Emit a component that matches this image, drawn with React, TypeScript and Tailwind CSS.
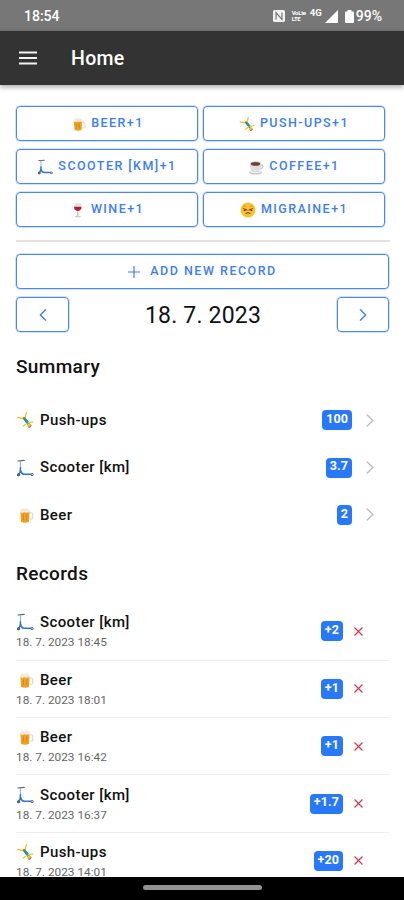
import type { ReactNode } from "react"

type Kind = "beer" | "pushups" | "scooter" | "coffee" | "wine" | "migraine"

type RecordItem = {
  kind: Kind
  name: string
  date: string
  amount: string
}

const quickButtons: { kind: Kind; label: string }[] = [
  { kind: "beer", label: "BEER+1" },
  { kind: "pushups", label: "PUSH-UPS+1" },
  { kind: "scooter", label: "SCOOTER [KM]+1" },
  { kind: "coffee", label: "COFFEE+1" },
  { kind: "wine", label: "WINE+1" },
  { kind: "migraine", label: "MIGRAINE+1" },
]

const summary: { kind: Kind; name: string; total: string }[] = [
  { kind: "pushups", name: "Push-ups", total: "100" },
  { kind: "scooter", name: "Scooter [km]", total: "3.7" },
  { kind: "beer", name: "Beer", total: "2" },
]

const records: RecordItem[] = [
  { kind: "scooter", name: "Scooter [km]", date: "18. 7. 2023 18:45", amount: "+2" },
  { kind: "beer", name: "Beer", date: "18. 7. 2023 18:01", amount: "+1" },
  { kind: "beer", name: "Beer", date: "18. 7. 2023 16:42", amount: "+1" },
  { kind: "scooter", name: "Scooter [km]", date: "18. 7. 2023 16:37", amount: "+1.7" },
  { kind: "pushups", name: "Push-ups", date: "18. 7. 2023 14:01", amount: "+20" },
]

const drawings: Record<Kind, ReactNode> = {
  beer: (
    <>
      <path d="M13 6.500h1.500q1.300 0 1.300 1.300v3.400q0 1.300-1.300 1.300H13" fill="none" stroke="#dddbd7" strokeWidth="1.200" />
      <path d="M4.200 5h8.600l-.5 10q-3.900 1.500-7.500 0z" fill="#f2a01d" />
      <path d="M7 8v5.500M10 8v5.500" stroke="#dc8a16" strokeWidth="1.100" />
      <path d="M3.800 5.600q-.6-2.200 1.400-2.600Q6.500 1.500 8.600 2.600q2-1 3.400.6 1.800.5 1.100 2.600-1.300.8-2.500.1l-1.200.8-1.500-.8-2 .8z" fill="#f3ead9" />
    </>
  ),
  pushups: (
    <>
      <path d="M8.300 7.200L9.800 1.800M7.600 7.400L1.400 6.200" stroke="#f5c33c" strokeWidth="1.500" strokeLinecap="round" fill="none" />
      <path d="M7.600 6.800l2 2.200" stroke="#66717c" strokeWidth="2.300" strokeLinecap="round" />
      <path d="M9.300 8.900l2 2.500" stroke="#1e9e92" strokeWidth="2.800" strokeLinecap="round" />
      <path d="M11.800 11l4-.7M10.200 11.800l-3.400 2.400" stroke="#f5c33c" strokeWidth="1.300" strokeLinecap="round" />
      <circle cx="12.600" cy="13.800" r="1.800" fill="#e9b43a" />
      <path d="M11.800 15.400q2.200.4 2.700-1.700" fill="none" stroke="#8d6239" strokeWidth=".9" />
    </>
  ),
  scooter: (
    <>
      <path d="M1.800 1.800l6-.5" stroke="#59616b" strokeWidth="1" fill="none" strokeLinecap="round" />
      <path d="M4.200 2v8" stroke="#8fb2d8" strokeWidth="1" />
      <path d="M4.200 8.400q.2 4.800-2 6.200M4.500 10.800q.3 3.400 3.200 3.600h6.400" stroke="#3076cf" strokeWidth="1.500" fill="none" strokeLinecap="round" />
      <circle cx="2.400" cy="14.900" r="1.500" fill="#4d6075" />
      <circle cx="15.200" cy="14.700" r="1.500" fill="#647382" />
      <circle cx="15.200" cy="14.700" r=".6" fill="#d9dfe5" />
    </>
  ),
  coffee: (
    <>
      <ellipse cx="8" cy="14.200" rx="7" ry="2.300" fill="#c8c8c8" />
      <ellipse cx="8" cy="13.600" rx="6.200" ry="1.600" fill="#eeeeee" />
      <path d="M13 6.400q3.500-.4 2.800 2-.6 2-3.600 2.100" fill="none" stroke="#bdbdbd" strokeWidth="1.200" />
      <path d="M2 5h12q0 8-4 9H6.200Q2 13 2 5z" fill="#dedede" />
      <ellipse cx="8" cy="5" rx="6" ry="2.600" fill="#d2ceca" />
      <ellipse cx="8" cy="5.200" rx="4.900" ry="1.900" fill="#6d4334" />
    </>
  ),
  wine: (
    <>
      <path d="M4.800 1h7l.5 4.800Q12 9.500 8.300 9.800 4.600 9.500 4.300 5.800z" fill="#e5e1e1" />
      <path d="M4.400 5h7.800q.2 4.200-3.900 4.500Q4.200 9.200 4.400 5z" fill="#b51f2d" />
      <path d="M8.300 9.700v5" stroke="#b9a9a9" strokeWidth="1.100" />
      <ellipse cx="8.300" cy="15.300" rx="3.200" ry="1" fill="#cccccc" />
    </>
  ),
  migraine: (
    <>
      <circle cx="8.500" cy="8.500" r="7.900" fill="#fbc02d" />
      <path d="M3.500 5.200l3-1.400M13.500 5.200l-3-1.400" stroke="#c88718" strokeWidth=".9" />
      <path d="M3.500 7l3.300 1.300-3 .9M13.500 7l-3.300 1.300 3 .9" stroke="#6e4413" strokeWidth="1.100" fill="none" />
      <path d="M6 12.700q2.500-2.400 5 0" stroke="#6e4413" strokeWidth="1.100" fill="none" />
    </>
  ),
}

function Emoji({ kind, className }: { kind: Kind; className: string }) {
  return (
    <svg viewBox="0 0 17 17" className={`shrink-0 ${className}`} aria-hidden>
      {drawings[kind]}
    </svg>
  )
}

function Chevron({ left = false, className }: { left?: boolean; className: string }) {
  return (
    <svg viewBox="0 0 8 14" fill="none" stroke="currentColor" strokeLinecap="round" strokeLinejoin="round" className={className} aria-hidden>
      <path d={left ? "M7 1L1 7l6 6" : "M1 1l6 6-6 6"} />
    </svg>
  )
}

function Badge({ children }: { children: ReactNode }) {
  return (
    <span className="flex h-5 items-center rounded-[4px] bg-[#2878fa] px-[4px] pb-[2px] text-[12.5px] leading-none font-bold tracking-[0.1px] text-white">
      {children}
    </span>
  )
}

function StatusBar() {
  return (
    <div className="flex h-[31px] shrink-0 items-center bg-[#777] pt-px pr-[22px] pl-[24px] text-white">
      <span className="text-[14px] font-medium">18:54</span>
      <div className="ml-auto flex items-center">
        <svg viewBox="0 0 12 12" className="mr-[7px] h-3 w-3" aria-hidden>
          <rect width="12" height="12" rx="1.500" fill="#f2f2f2" />
          <path d="M3 9.500v-7l6 7v-7" fill="none" stroke="#777" strokeWidth="1.200" />
        </svg>
        <span className="mr-[4px] flex flex-col text-[6px] leading-[6px] font-bold tracking-[-0.3px]">
          <span>VoLte</span>
          <span>LTE</span>
        </span>
        <span className="mr-[3px] -mt-[6px] text-[9.5px] leading-none font-bold">4G</span>
        <svg viewBox="0 0 13 13" className="mr-[7px] h-[13px] w-[13px]" aria-hidden>
          <path d="M13 0v13H0z" fill="#fff" />
        </svg>
        <svg viewBox="0 0 9 13" className="mr-[2px] h-[13px] w-[9px]" aria-hidden>
          <path d="M2.500 0h4v1.500H8q1 0 1 1V12q0 1-1 1H1q-1 0-1-1V2.500q0-1 1-1h1.500z" fill="#fff" />
        </svg>
        <span className="text-[14px] font-medium">99%</span>
      </div>
    </div>
  )
}

const outlined =
  "flex items-center justify-center rounded-[4px] border border-[#4b86f5] text-[#3d7df5] shadow-[0_0_0_0.5px_#4b86f580]"

export default function App() {
  return (
    <div className="flex h-[900px] w-[404px] flex-col overflow-hidden bg-white font-[Roboto,sans-serif] text-[#111]">
      <StatusBar />

      <header className="z-10 flex h-[54px] shrink-0 items-center bg-[#333] pl-[19px] text-white shadow-[0_2px_5px_rgba(0,0,0,0.35)]">
        <svg viewBox="0 0 18 14" className="h-[14px] w-[18px]" aria-hidden>
          <path d="M0 1.500h18M0 7h18M0 12.500h18" stroke="#f2f2f2" strokeWidth="2.200" />
        </svg>
        <h1 className="ml-[34px] pt-px text-[19.5px] font-medium tracking-[0.3px]">Home</h1>
      </header>

      <main className="flex min-h-0 flex-1 flex-col overflow-hidden px-4 pt-[21px]">
        <div className="grid shrink-0 grid-cols-[182px_182px] gap-x-[5px] gap-y-[8px]">
          {quickButtons.map((b) => (
            <button key={b.kind} type="button" className={`${outlined} h-[35px] text-[12.5px] font-medium tracking-[1.450px]`}>
              <Emoji kind={b.kind} className="mr-[5px] h-4 w-4" />
              {b.label}
            </button>
          ))}
        </div>

        <div className="mt-[13px] mr-[-2px] h-[2px] shrink-0 bg-[#e2e2e2]" />

        <button type="button" className={`${outlined} mt-[12px] mr-[-1px] h-[35px] shrink-0 text-[12.5px] font-medium tracking-[1.500px]`}>
          <svg viewBox="0 0 12 12" className="mr-[10px] h-3 w-3" aria-hidden>
            <path d="M6 0v12M0 6h12" stroke="currentColor" strokeWidth="1.200" />
          </svg>
          ADD NEW RECORD
        </button>

        <div className="mt-[8px] mr-[-1px] flex shrink-0 items-center justify-between">
          <button type="button" aria-label="Previous day" className={`${outlined} h-[35px] w-[53px]`}>
            <Chevron left className="h-[12px] w-[8px] stroke-[1.600]" />
          </button>
          <span className="pt-[2px] text-[23px] leading-8 tracking-[0.2px]">18. 7. 2023</span>
          <button type="button" aria-label="Next day" className={`${outlined} h-[35px] w-[52px]`}>
            <Chevron className="h-[12px] w-[8px] stroke-[1.600]" />
          </button>
        </div>

        <h2 className="mt-[21px] shrink-0 text-[19px] leading-7 font-medium tracking-[0.350px]">Summary</h2>
        <ul className="mt-[15.500px] shrink-0">
          {summary.map((s) => (
            <li key={s.kind} className="flex h-[47.400px] items-center pr-[14px]">
              <Emoji kind={s.kind} className="mr-[6px] h-[18px] w-[18px]" />
              <span className="text-[15px] font-medium tracking-[0.400px]">{s.name}</span>
              <span className="ml-auto flex items-center gap-[14px]">
                <Badge>{s.total}</Badge>
                <Chevron className="h-[13px] w-[8px] stroke-[1.500] text-[#bdbdbd]" />
              </span>
            </li>
          ))}
        </ul>

        <h2 className="mt-[21px] shrink-0 text-[19px] leading-7 font-medium tracking-[0.350px]">Records</h2>
        <ul className="mt-[15.500px] mr-[-1px] shrink-0">
          {records.map((r) => (
            <li key={r.date} className="flex h-[57.400px] items-center border-b border-[#efefef] pr-[26px]">
              <div>
                <div className="flex items-center">
                  <Emoji kind={r.kind} className="mr-[6px] h-[18px] w-[18px]" />
                  <span className="text-[15px] leading-[22px] font-medium tracking-[0.400px]">{r.name}</span>
                </div>
                <div className="text-[11.800px] leading-[18px] text-[#666]">{r.date}</div>
              </div>
              <span className="ml-auto flex items-center gap-[11px]">
                <Badge>{r.amount}</Badge>
                <svg viewBox="0 0 9 9" className="h-[9px] w-[9px]" aria-label="Delete record">
                  <path d="M.5.5l8 8M8.500.5l-8 8" stroke="#e0364c" strokeWidth="1.200" />
                </svg>
              </span>
            </li>
          ))}
        </ul>
      </main>

      <div className="flex h-[23px] shrink-0 justify-center bg-black pt-[8px]">
        <div className="h-[5px] w-[119px] rounded-full bg-[#929292]" />
      </div>
    </div>
  )
}
